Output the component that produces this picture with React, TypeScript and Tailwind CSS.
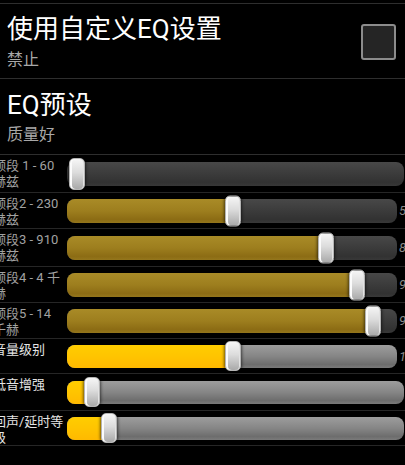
import React from "react";

type Row = {
  lines: string[];
  h: number;
  thumb: number | null; // center x relative to track left
  fill: boolean;
  bright: boolean;
  value?: string;
  trackH: number;
  thumbH: number;
};

const rows: Row[] = [
  { lines: ["频段 1 - 60", "赫兹"], h: 37, thumb: 10, fill: false, bright: false, trackH: 24, thumbH: 32 },
  { lines: ["频段2 - 230", "赫兹"], h: 35, thumb: 166, fill: true, bright: false, value: "5", trackH: 24, thumbH: 31 },
  { lines: ["频段3 - 910", "赫兹"], h: 37, thumb: 259, fill: true, bright: false, value: "8", trackH: 24, thumbH: 31 },
  { lines: ["频段4 - 4 千", "赫"], h: 35, thumb: 290, fill: true, bright: false, value: "9", trackH: 24, thumbH: 31 },
  { lines: ["频段5 - 14", "千赫"], h: 35, thumb: 306, fill: true, bright: false, value: "9", trackH: 24, thumbH: 31 },
  { lines: ["音量级别"], h: 34, thumb: 166, fill: true, bright: true, value: "1", trackH: 23, thumbH: 30 },
  { lines: ["低音增强"], h: 36, thumb: 25, fill: true, bright: true, trackH: 23, thumbH: 30 },
  { lines: ["回声/延时等", "级"], h: 34, thumb: 42, fill: true, bright: true, trackH: 23, thumbH: 30 },
];

function Thumb({ left, h }: { left: number; h: number }) {
  return (
    <div
      className="absolute top-1/2 w-[16px] -translate-y-1/2 rounded-[5px] border border-[#b4b4b4] bg-[linear-gradient(to_bottom,#f6f6f6,#dcdcdc_45%,#a9a9a9)] shadow-[0_0_3px_1px_rgba(0,0,0,0.55),inset_2px_0_0_#fbfbfb,inset_-1px_0_0_#e2e2e2]"
      style={{ left: left - 8, height: h }}
    />
  );
}

function SliderRow({ r }: { r: Row }) {
  const track = r.bright
    ? "bg-[linear-gradient(to_bottom,#9d9d9d,#858585_50%,#6d6d6d_85%,#7a7a7a)]"
    : "bg-[linear-gradient(to_bottom,#484848,#3b3b3b_50%,#323232_85%,#383838)]";
  const fill = r.bright
    ? "bg-[linear-gradient(to_bottom,#ffcd00,#ffc400_50%,#ffb900)]"
    : "bg-[linear-gradient(to_bottom,#a98b27,#9d7e1e_50%,#8c6c14_85%,#94761c)]";
  const wide = r.value === undefined;
  return (
    <div className="flex items-stretch border-b border-[#262626]" style={{ height: r.h + 1 }}>
      <div
        className={`ml-[-7px] w-[74px] shrink-0 pt-[3px] text-[13px] leading-[16px] ${
          r.bright ? "text-[#e4e4e4]" : "text-[#a2a2a2]"
        }`}
      >
        {r.lines.map((l, i) => (
          <div key={i} className="whitespace-nowrap">
            {l}
          </div>
        ))}
      </div>
      <div className="flex flex-1 items-center">
        <div
          className={`relative ${wide ? "w-[337px]" : "w-[330px]"} rounded-[8px] ${track}`}
          style={{ height: r.trackH }}
        >
          {r.fill && r.thumb !== null && (
            <div
              className={`absolute left-0 top-0 bottom-0 rounded-l-[8px] ${fill}`}
              style={{ width: r.thumb }}
            />
          )}
          {r.thumb !== null && <Thumb left={r.thumb} h={r.thumbH} />}
        </div>
        {r.value && (
          <div className="ml-[2px] text-[13px] italic leading-none text-[#8a8a8a]">{r.value}</div>
        )}
      </div>
    </div>
  );
}

export default function App() {
  return (
    <div
      className="relative h-[465px] w-[405px] overflow-hidden bg-black"
      style={{ fontFamily: 'Roboto, "Noto Sans CJK SC", sans-serif' }}
    >
      <div className="h-[3px]" />
      <div className="flex h-[76px] items-start justify-between border-t border-b border-[#2e2e2e] pl-[7px] pr-[9px] pt-[10px]">
        <div>
          <div className="text-[26px] leading-[30px] text-white">使用自定义EQ设置</div>
          <div className="mt-[6px] text-[16px] leading-[20px] text-[#a8a8a8]">禁止</div>
        </div>
        <div className="mt-[10px] h-[36px] w-[35px] rounded-[3px] border-2 border-[#8c8c8c] bg-[#252525]" />
      </div>
      <div className="h-[76px] border-b border-[#2e2e2e] pl-[7px] pt-[11px]">
        <div className="text-[26px] leading-[30px] text-white">EQ预设</div>
        <div className="mt-[5px] text-[16px] leading-[20px] text-[#a8a8a8]">质量好</div>
      </div>
      {rows.map((r, i) => (
        <SliderRow key={i} r={r} />
      ))}
    </div>
  );
}
